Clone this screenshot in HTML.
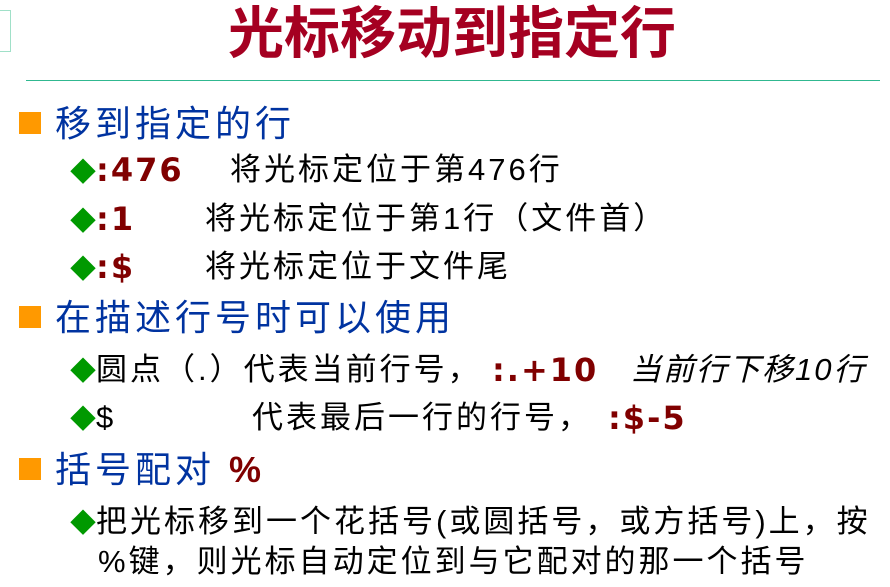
<!DOCTYPE html><html><head><meta charset="utf-8"><style>
body{margin:0;width:890px;height:587px;background:#fff;position:relative;overflow:hidden;font-family:"Liberation Sans","Noto Sans CJK SC",sans-serif}
.a{position:absolute;white-space:nowrap;line-height:1}
.t{font-size:56px;font-weight:bold;color:#a50021;left:228px;top:6px}
.l1{font-size:36px;color:#0033a0;left:55px;letter-spacing:4px}
.sq{position:absolute;left:19px;width:22px;height:22px;background:#ff9900}
.l2{font-size:31px;color:#000;letter-spacing:3px}
.d{color:#009900;font-size:26px;letter-spacing:0}
.c{color:#800000;font-weight:bold;font-family:"DejaVu Sans",sans-serif;letter-spacing:2px;font-size:32px}
</style></head><body>
<div style="position:absolute;left:0;top:10px;width:10px;height:40px;border:1px solid #a0e0c8;border-left:none"></div>
<div class="a t">光标移动到指定行</div>
<div style="position:absolute;left:26px;top:80px;width:854px;height:1px;background:#30b890"></div>
<div class="sq" style="top:112px"></div><div class="a l1" style="top:106px">移到指定的行</div>
<div class="a l2" style="left:70px;top:154px"><span class="d">◆</span><span class="c">:476</span></div><div class="a l2" style="left:230px;top:154px">将光标定位于第476行</div>
<div class="a l2" style="left:70px;top:203px"><span class="d">◆</span><span class="c">:1</span></div><div class="a l2" style="left:205px;top:203px">将光标定位于第1行（文件首）</div>
<div class="a l2" style="left:70px;top:251px"><span class="d">◆</span><span class="c">:$</span></div><div class="a l2" style="left:205px;top:251px">将光标定位于文件尾</div>
<div class="sq" style="top:306px"></div><div class="a l1" style="top:300px">在描述行号时可以使用</div>
<div class="a l2" style="left:70px;top:354px"><span class="d">◆</span>圆点（.）代表当前行号，</div><div class="a l2 c" style="left:492px;top:354px">:.+10</div><div class="a l2" style="left:630px;top:354px;font-style:italic;letter-spacing:2px">当前行下移10行</div>
<div class="a l2" style="left:70px;top:402px"><span class="d">◆</span>$</div><div class="a l2" style="left:252px;top:402px">代表最后一行的行号，</div><div class="a l2 c" style="left:608px;top:402px">:$-5</div>
<div class="sq" style="top:458px"></div><div class="a l1" style="top:452px">括号配对 <span style="color:#800000;font-weight:bold">%</span></div>
<div class="a l2" style="left:70px;top:506px"><span class="d">◆</span>把光标移到一个花括号(或圆括号，或方括号)上，按</div>
<div class="a l2" style="left:98px;top:546px">%键，则光标自动定位到与它配对的那一个括号</div>
</body></html>
